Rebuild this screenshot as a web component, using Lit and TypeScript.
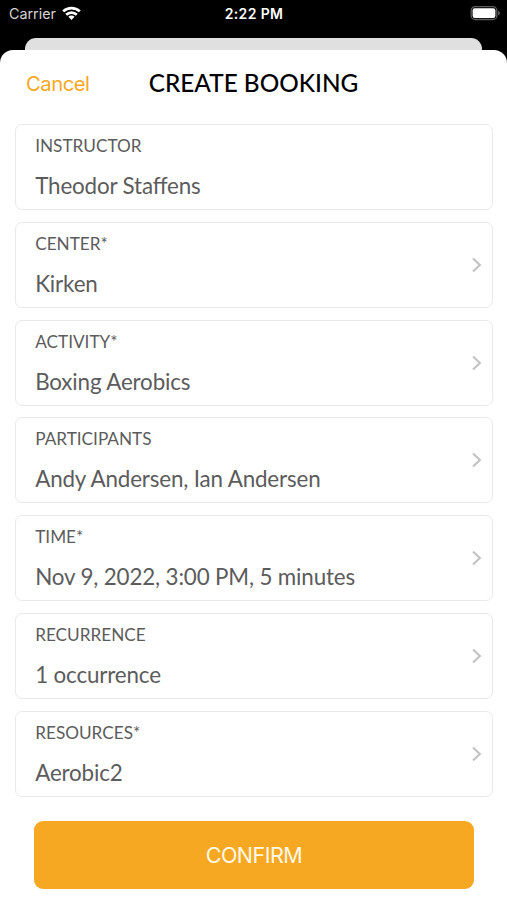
import { LitElement, html, css } from "lit";
import { customElement, property } from "lit/decorators.js";

@customElement("booking-field")
class BookingField extends LitElement {
  @property() label = "";
  @property() value = "";
  @property({ type: Boolean }) link = false;

  static styles = css`
    :host {
      display: flex;
      align-items: center;
      justify-content: space-between;
      box-sizing: border-box;
      height: 86px;
      padding: 0 10px 0 19.7px;
      border: 1.35px solid #e9e9ea;
      border-radius: 7px;
      background: #fff;
      color: #5c5c5c;
      font-family: Lato, sans-serif;
    }
    .text {
      display: flex;
      flex-direction: column;
      gap: 14px;
    }
    .label {
      font-size: 17.2px;
      line-height: 24px;
    }
    .value {
      font-size: 22.4px;
      line-height: 28px;
      letter-spacing: -0.16px;
      font-feature-settings: "liga" 1;
    }
    .label, .value { white-space: nowrap; }
    .chevron {
      width: 10px;
      height: 16px;
      fill: none;
      stroke: #c2c2c4;
      stroke-width: 2.1;
    }
  `;

  render() {
    return html`
      <div class="text">
        <span class="label">${this.label}</span>
        <span class="value">${this.value}</span>
      </div>
      ${this.link
        ? html`<svg class="chevron" viewBox="0 0 10 16"><path d="M1 1.5 7.9 8 1 14.5" /></svg>`
        : null}
    `;
  }
}

const FIELDS = [
  { label: "INSTRUCTOR", value: "Theodor Staffens", link: false },
  { label: "CENTER*", value: "Kirken", link: true },
  { label: "ACTIVITY*", value: "Boxing Aerobics", link: true },
  { label: "PARTICIPANTS", value: "Andy Andersen, Ian Andersen", link: true },
  { label: "TIME*", value: "Nov 9, 2022, 3:00 PM, 5 minutes", link: true },
  { label: "RECURRENCE", value: "1 occurrence", link: true },
  { label: "RESOURCES*", value: "Aerobic2", link: true },
];

@customElement("app-root")
class AppRoot extends LitElement {
  static styles = css`
    :host {
      display: flex;
      flex-direction: column;
      box-sizing: border-box;
      width: 507px;
      height: 900px;
      overflow: hidden;
      background: #000;
      font-family: Inter, sans-serif;
    }
    .status {
      display: grid;
      grid-template-columns: 1fr auto 1fr;
      align-items: center;
      height: 28px;
      padding: 0 6px 0 9px;
      margin-bottom: 10px;
      color: #fff;
      font-size: 14.3px;
      line-height: 20px;
    }
    .carrier {
      display: flex;
      align-items: center;
      gap: 6px;
      color: #d4d4d4;
    }
    .wifi { width: 19px; height: 14px; margin-top: -2px; }
    .clock {
      font-weight: 600;
      font-size: 14px;
      letter-spacing: 0.35px;
      margin-right: 2px;
    }
    .battery { width: 31px; height: 16px; justify-self: end; margin-top: -2px; }
    .behind {
      flex: none;
      height: 12px;
      margin: 0 25px;
      border-radius: 11px 11px 0 0;
      background: #e0e0e0;
    }
    .sheet {
      flex: 1;
      display: flex;
      flex-direction: column;
      border-radius: 13px 13px 0 0;
      background: #fff;
    }
    .header {
      display: grid;
      grid-template-columns: 1fr auto 1fr;
      align-items: center;
      height: 66px;
      margin-bottom: 8px;
      padding: 0 26px;
    }
    .cancel {
      color: #f7a823;
      font-size: 20.3px;
      letter-spacing: -0.5px;
      padding-top: 1px;
    }
    .title {
      font: 500 24.35px/30px Lato, sans-serif;
      color: #000;
    }
    .fields {
      display: flex;
      flex-direction: column;
      gap: 11.75px;
      padding: 0 14.5px;
    }
    .confirm {
      display: flex;
      align-items: center;
      justify-content: center;
      height: 68px;
      margin: 24px 33px 0 34px;
      border: 0;
      border-radius: 9px;
      background: #f7a823;
      color: #fff8e6;
      font: 400 21.5px/28px Inter, sans-serif;
      letter-spacing: -0.5px;
    }
  `;

  render() {
    return html`
      <div class="status">
        <div class="carrier">
          <span>Carrier</span>
          <svg class="wifi" viewBox="0 0 19 14">
            <g fill="none" stroke="#fff" stroke-width="2.7">
              <path d="M1.2 5.4a11.9 11.9 0 0 1 16.6 0" />
              <path d="M4.2 8.7a7.6 7.6 0 0 1 10.6 0" />
            </g>
            <path fill="#fff" d="M6.4 10.8a4.4 4.4 0 0 1 6.2 0L9.5 13.9z" />
          </svg>
        </div>
        <span class="clock">2:22 PM</span>
        <svg class="battery" viewBox="0 0 31 16">
          <rect x="1.2" y="1.7" width="25.6" height="12.8" rx="3.8" fill="none" stroke="#5c5c5c" stroke-width="1.3" />
          <rect x="2.6" y="3.3" width="22.8" height="9.6" rx="2.2" fill="#fff" />
          <path d="M28.2 5.8v4.6c1-.4 1.6-1.3 1.6-2.3s-.6-1.9-1.6-2.3z" fill="#6b6b6b" />
        </svg>
      </div>
      <div class="behind"></div>
      <div class="sheet">
        <div class="header">
          <span class="cancel">Cancel</span>
          <span class="title">CREATE BOOKING</span>
        </div>
        <div class="fields">
          ${FIELDS.map(
            (f) => html`<booking-field .label=${f.label} .value=${f.value} .link=${f.link}></booking-field>`,
          )}
        </div>
        <button class="confirm">CONFIRM</button>
      </div>
    `;
  }
}
